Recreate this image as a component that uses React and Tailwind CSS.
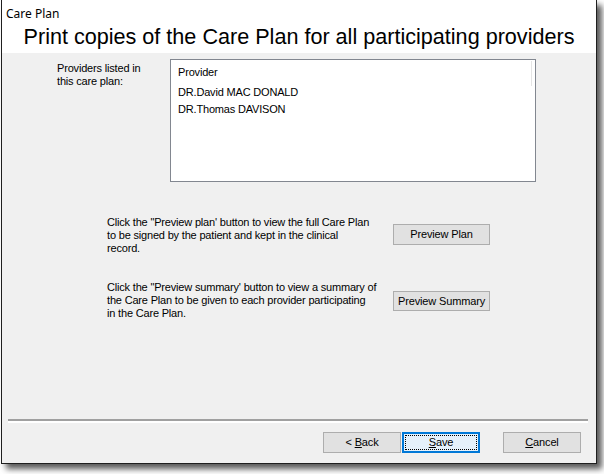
import React from "react";

function Btn({ children, w = "w-[78px]", h = "h-[21px]", focused = false, className = "" }) {
  if (focused) {
    return (
      <div className={`${w} ${h} ${className} border-2 border-[#0078d7] bg-[#e5f1fb] p-px flex`}>
        <div className="flex-1 border border-dotted border-black flex items-center justify-center text-[11px] leading-none text-black tracking-[-0.15px]">
          <span>{children}</span>
        </div>
      </div>
    );
  }
  return (
    <div className={`${w} ${h} ${className} border border-[#adadad] bg-[#e1e1e1] flex items-center justify-center text-[11px] leading-none text-black tracking-[-0.15px]`}>
      <span>{children}</span>
    </div>
  );
}

export default function App() {
  return (
    <div className="w-[604px] h-[474px] bg-white overflow-hidden" style={{ fontFamily: '"Liberation Sans", Arial, sans-serif' }}>
      <div className="ml-px w-[596px] h-[464px] border-l border-r border-b border-[#1f1f1f] flex flex-col shadow-[5px_5px_6px_rgba(0,0,0,0.65)]">
        {/* Header */}
        <div className="h-[53px] bg-white shrink-0">
          <div className="pl-[4px] pt-[6px] text-[12px] leading-[16px] text-black" style={{ fontFamily: '"Segoe UI", "Noto Sans", sans-serif' }}>
            Care Plan
          </div>
          <div className="mt-[3px] text-center text-[21.6px] leading-[24px] text-black">
            Print copies of the Care Plan for all participating providers
          </div>
        </div>

        {/* Body */}
        <div className="flex-1 bg-[#f0f0f0] flex flex-col text-[11px] text-black tracking-[-0.18px]">
          <div className="flex pl-[55px] pt-[6px]">
            <div className="w-[113px] pt-[3px] leading-[13px]">
              Providers listed in
              <br />
              this care plan:
            </div>
            <div className="relative w-[366px] h-[123px] border border-[#828790] bg-white pl-[7px] pt-[6px]">
              <div className="leading-[13px]">Provider</div>
              <div className="mt-[5px] leading-[17px]">DR.David MAC DONALD</div>
              <div className="leading-[17px]">DR.Thomas DAVISON</div>
              <div className="absolute right-[3px] top-px w-px h-[25px] bg-[#e4e4e4]" />
            </div>
          </div>

          <div className="flex pl-[105px] mt-[34px]">
            <div className="w-[286px] leading-[13px] whitespace-nowrap">
              Click the "Preview plan' button to view the full Care Plan
              <br />
              to be signed by the patient and kept in the clinical
              <br />
              record.
            </div>
            <Btn w="w-[97px]" h="h-[21px]" className="mt-[8px]">Preview Plan</Btn>
          </div>

          <div className="flex pl-[105px] mt-[26px]">
            <div className="w-[286px] leading-[13px] whitespace-nowrap">
              Click the "Preview summary' button to view a summary of
              <br />
              the Care Plan to be given to each provider participating
              <br />
              in the Care Plan.
            </div>
            <Btn w="w-[97px]" h="h-[20px]" className="mt-[10px]">Preview Summary</Btn>
          </div>

          <div className="mt-auto">
            <div className="ml-[6px] w-[580px] h-[4px] border-t-2 border-[#a0a0a0] border-b-2 border-b-white" />
            <div className="flex pl-[321px] mt-[9px] mb-[10px]">
              <Btn>
                {"< "}<span className="underline">B</span>ack
              </Btn>
              <Btn focused className="ml-px">
                <span className="underline">S</span>ave
              </Btn>
              <Btn className="ml-[23px]">
                <span className="underline">C</span>ancel
              </Btn>
            </div>
          </div>
        </div>
      </div>
    </div>
  );
}
